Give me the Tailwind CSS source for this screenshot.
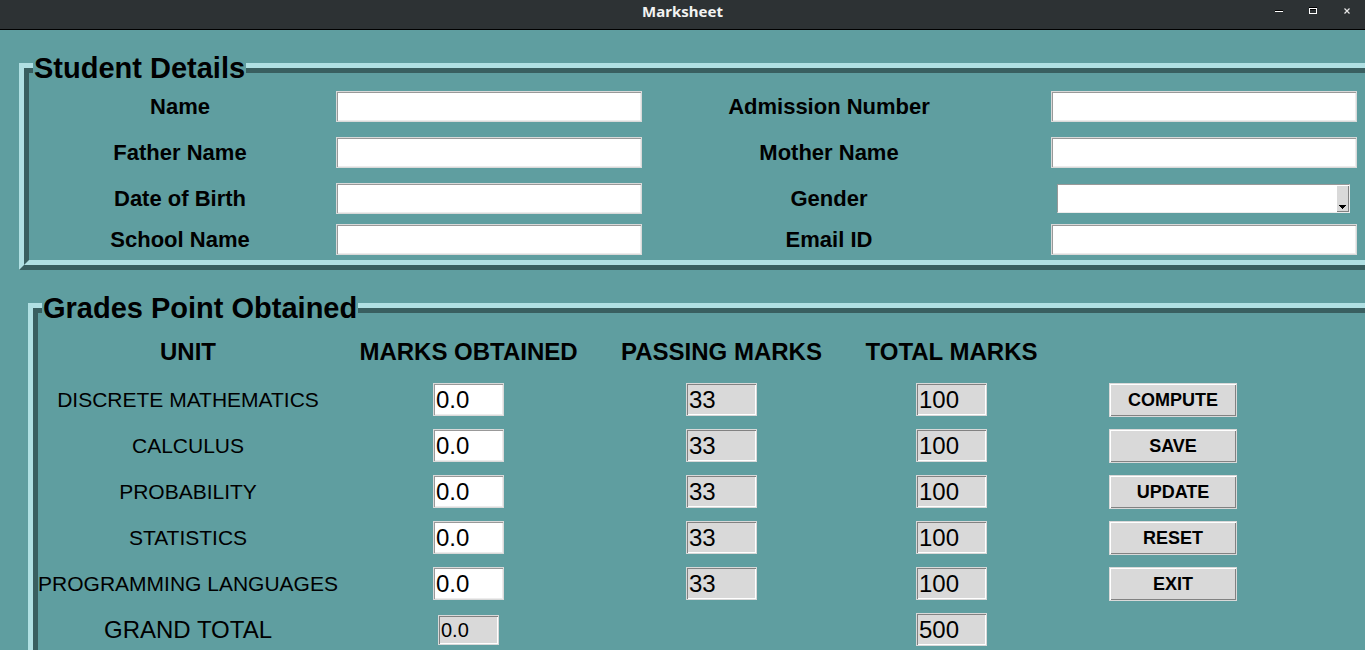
<!DOCTYPE html>
<html lang="en">
<head>
<meta charset="utf-8">
<title>Marksheet</title>
<script src="https://cdn.jsdelivr.net/npm/@tailwindcss/browser@4"></script>
</head>
<body class="flex h-screen flex-col overflow-hidden bg-[#5f9ea0] font-['Liberation_Sans',Arial,sans-serif] text-black">
<header class="grid h-[30px] shrink-0 grid-cols-[1fr_auto_1fr] items-start border-b border-black bg-[#2d3234]">
  <h1 class="col-start-2 font-['Noto_Sans',sans-serif] text-[15px] leading-[22px] font-bold text-[#f2f2f2]">Marksheet</h1>
  <div class="flex justify-end gap-[14px] pr-2">
    <button type="button" aria-label="Minimize" class="flex h-[22px] w-5 items-center justify-center"><svg width="20" height="22" viewBox="0 0 20 22" shape-rendering="crispEdges"><path d="M6 10h8v1H6z" fill="#000"/><path d="M6 11h8v1H6z" fill="#fff"/></svg></button>
    <button type="button" aria-label="Maximize" class="flex h-[22px] w-5 items-center justify-center"><svg width="20" height="22" viewBox="0 0 20 22" shape-rendering="crispEdges"><path d="M6 7h8v1H6z" fill="#000"/><path d="M6 8h8v6H6zM7 9v4h6V9z" fill="#fff" fill-rule="evenodd"/><path d="M7 9h6v1H7z" fill="#000"/></svg></button>
    <button type="button" aria-label="Close" class="flex h-[22px] w-5 items-center justify-center"><svg width="20" height="22" viewBox="0 0 20 22"><path d="M7.500 8.500l5 5M12.500 8.500l-5 5" stroke="#e8e8e8" stroke-width="1.200"/></svg></button>
  </div>
</header>

<main class="flex flex-col gap-[33px] pt-[33px]">
  <fieldset class="relative -mr-[42px] ml-[19px] border-5 border-t-[#b0e0e3] border-r-[#395f60] border-b-[#395f60] border-l-[#b0e0e3]">
    <legend class="absolute -top-4 left-[9px] bg-[#5f9ea0] px-px text-[29px] leading-[33px] font-bold">Student Details</legend>
    <div class="grid grid-cols-[302fr_316fr_364fr_386fr] grid-rows-[46px_46px_41px_31px] items-start border-5 border-t-[#395f60] border-r-[#b0e0e3] border-b-[#b0e0e3] border-l-[#395f60] pt-[18px] pb-[5px] text-[22px] leading-[31px]">
      <label for="name" class="text-center font-bold">Name</label>
      <div class="flex px-[5px]"><input id="name" class="h-[31px] w-full border border-[#d9d9d9] bg-white px-1 shadow-[inset_1px_1px_#999,inset_-1px_-1px_#ececec] outline-none"></div>
      <label for="adm" class="text-center font-bold">Admission Number</label>
      <div class="flex px-10"><input id="adm" class="h-[31px] w-full border border-[#d9d9d9] bg-white px-1 shadow-[inset_1px_1px_#999,inset_-1px_-1px_#ececec] outline-none"></div>

      <label for="father" class="text-center font-bold">Father Name</label>
      <div class="flex px-[5px]"><input id="father" class="h-[31px] w-full border border-[#d9d9d9] bg-white px-1 shadow-[inset_1px_1px_#999,inset_-1px_-1px_#ececec] outline-none"></div>
      <label for="mother" class="text-center font-bold">Mother Name</label>
      <div class="flex px-10"><input id="mother" class="h-[31px] w-full border border-[#d9d9d9] bg-white px-1 shadow-[inset_1px_1px_#999,inset_-1px_-1px_#ececec] outline-none"></div>

      <label for="dob" class="text-center font-bold">Date of Birth</label>
      <div class="flex px-[5px]"><input id="dob" class="h-[31px] w-full border border-[#d9d9d9] bg-white px-1 shadow-[inset_1px_1px_#999,inset_-1px_-1px_#ececec] outline-none"></div>
      <label for="gender" class="text-center font-bold">Gender</label>
      <div class="pt-px pr-[47px] pl-[46px]">
        <div class="relative">
          <select id="gender" class="block h-[29px] w-full appearance-none border border-t-[#999] border-r-[#ececec] border-b-[#ececec] border-l-[#999] bg-white px-1 text-[20px] outline-none"><option></option><option>Male</option><option>Female</option></select>
          <span class="pointer-events-none absolute top-[2px] right-px flex h-[26px] w-3 items-end justify-center border-r border-b border-[#828282] bg-[#d9d9d9] pb-[2px]"><svg width="7" height="4" viewBox="0 0 7 4" shape-rendering="crispEdges"><path d="M0 0h7v1H6v1H5v1H4v1H3V3H2V2H1V1H0z" fill="#000"/></svg></span>
        </div>
      </div>

      <label for="school" class="text-center font-bold">School Name</label>
      <div class="flex px-[5px]"><input id="school" class="h-[31px] w-full border border-[#d9d9d9] bg-white px-1 shadow-[inset_1px_1px_#999,inset_-1px_-1px_#ececec] outline-none"></div>
      <label for="email" class="text-center font-bold">Email ID</label>
      <div class="flex px-10"><input id="email" type="email" class="h-[31px] w-full border border-[#d9d9d9] bg-white px-1 shadow-[inset_1px_1px_#999,inset_-1px_-1px_#ececec] outline-none"></div>
    </div>
  </fieldset>

  <fieldset class="relative -mr-5 ml-7 border-5 border-t-[#b0e0e3] border-r-[#395f60] border-b-[#395f60] border-l-[#b0e0e3]">
    <legend class="absolute -top-4 left-[9px] bg-[#5f9ea0] px-px text-[29px] leading-[33px] font-bold">Grades Point Obtained</legend>
    <div class="border-5 border-t-[#395f60] border-r-[#b0e0e3] border-b-[#b0e0e3] border-l-[#395f60] pt-[14px] pr-[88px]">
      <table class="w-full table-fixed text-center text-[24px] leading-[33px]">
        <thead>
          <tr class="h-[50px] whitespace-nowrap">
            <th scope="col" class="w-[300px] pb-[2px]">UNIT</th>
            <th scope="col" class="w-[261px] pb-[2px]">MARKS OBTAINED</th>
            <th scope="col" class="w-[245px] pb-[2px]">PASSING MARKS</th>
            <th scope="col" class="w-[215px] pb-[2px]">TOTAL MARKS</th>
            <td class="w-[228px]"></td>
          </tr>
        </thead>
        <tbody id="units"></tbody>
        <tfoot>
          <tr class="h-[46px] align-top">
            <th scope="row" class="pt-[6px] font-normal"><label for="grand">GRAND TOTAL</label></th>
            <td class="pt-2"><input id="grand" value="0.0" class="mx-auto block h-[30px] w-[61px] border border-[#d9d9d9] bg-[#d9d9d9] px-[2px] text-[20px] shadow-[inset_1px_1px_#828282,inset_-1px_-1px_#fff] outline-none"></td>
            <td></td>
            <td class="pt-[6px]"><input aria-label="Total of all marks" value="500" readonly class="mx-auto block h-[33px] w-[71px] border border-[#d9d9d9] bg-[#d9d9d9] px-[2px] shadow-[inset_1px_1px_#828282,inset_-1px_-1px_#fff] outline-none"></td>
            <td></td>
          </tr>
        </tfoot>
      </table>
    </div>
  </fieldset>
</main>

<script>
  const units = [
    ["DISCRETE MATHEMATICS", "COMPUTE"],
    ["CALCULUS", "SAVE"],
    ["PROBABILITY", "UPDATE"],
    ["STATISTICS", "RESET"],
    ["PROGRAMMING LANGUAGES", "EXIT"]
  ];
  document.getElementById("units").innerHTML = units.map(([unit, action], i) => `
    <tr class="h-[46px] align-top">
      <th scope="row" class="pt-[6px] text-[21px] font-normal whitespace-nowrap"><label for="mark${i}">${unit}</label></th>
      <td class="pt-[6px]"><input id="mark${i}" value="0.0" class="mx-auto block h-[33px] w-[71px] border border-[#d9d9d9] bg-white px-[2px] shadow-[inset_1px_1px_#999,inset_-1px_-1px_#ececec] outline-none"></td>
      <td class="pt-[6px]"><input aria-label="${unit} passing marks" value="33" readonly class="mx-auto block h-[33px] w-[71px] border border-[#d9d9d9] bg-[#d9d9d9] px-[2px] shadow-[inset_1px_1px_#828282,inset_-1px_-1px_#fff] outline-none"></td>
      <td class="pt-[6px]"><input aria-label="${unit} total marks" value="100" readonly class="mx-auto block h-[33px] w-[71px] border border-[#d9d9d9] bg-[#d9d9d9] px-[2px] shadow-[inset_1px_1px_#828282,inset_-1px_-1px_#fff] outline-none"></td>
      <td class="pt-[6px]"><button type="button" class="mx-auto block h-[34px] w-[128px] border border-[#d9d9d9] bg-[#d9d9d9] text-[18px] leading-[32px] font-bold shadow-[inset_1px_1px_#fff,inset_-1px_-1px_#828282]">${action}</button></td>
    </tr>`).join("");
</script>
</body>
</html>
